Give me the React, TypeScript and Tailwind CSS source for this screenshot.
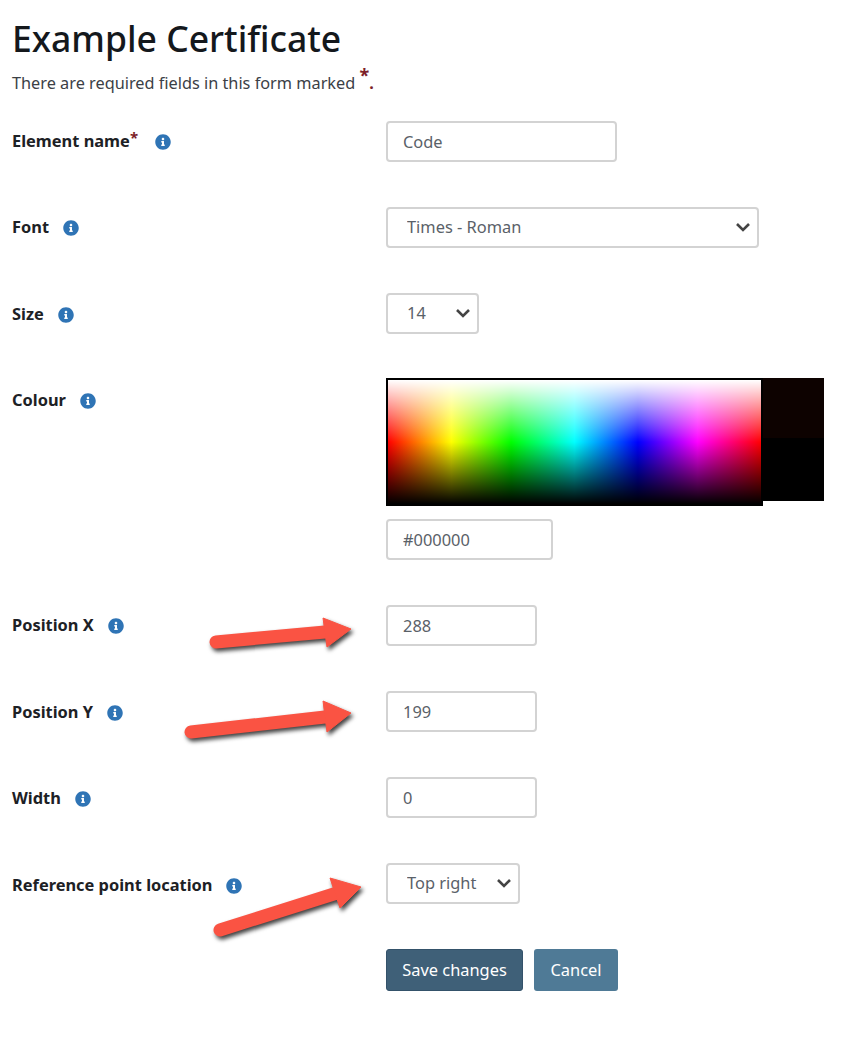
import { ReactNode } from "react";
import { FaInfoCircle } from "react-icons/fa";

function Label({ text, required, top = "pt-[9px]" }: { text: string; required?: boolean; top?: string }) {
  return (
    <div className={`${top} w-[386px] shrink-0 pl-3 flex items-start`}>
      <span className="text-[16.4px] leading-[22px] font-bold text-[#1d2125]">{text}</span>
      {required && <span className="text-[#7d1f2a] text-[15px] leading-[14px] font-bold">*</span>}
      <FaInfoCircle className={`${required ? "ml-[17px]" : "ml-[14px]"} mt-[4px] text-[#2f74b5] shrink-0`} size={16} />
    </div>
  );
}

function Row({ children, label, required, top }: { children: ReactNode; label: string; required?: boolean; top?: string }) {
  return (
    <div className="flex h-[86px]">
      <Label text={label} required={required} top={top} />
      <div>{children}</div>
    </div>
  );
}

function TextBox({ value, width }: { value: string; width: string }) {
  return (
    <input
      readOnly
      value={value}
      className={`${width} h-[41px] block rounded border-2 border-[#d3d3d3] bg-white pl-[15px] text-[16.4px] text-[#5a6168] outline-none`}
    />
  );
}

function Select({ value, width }: { value: string; width: string }) {
  return (
    <div className={`${width} relative h-[41px]`}>
      <select
        defaultValue={value}
        className="pl-[19px] w-full h-full appearance-none rounded border-2 border-[#d3d3d3] bg-white text-[16.4px] text-[#5a6168] outline-none"
      >
        <option>{value}</option>
      </select>
      <svg className="absolute right-[8px] top-[15px]" width="16" height="10" viewBox="0 0 16 10" fill="none">
        <path d="M2 2l6 6 6-6" stroke="#444" strokeWidth="2.6" />
      </svg>
    </div>
  );
}

function ColourPicker() {
  return (
    <div className="flex items-start h-[141px] -mt-px">
      <div className="w-[377px] h-[128px] border-2 border-black bg-[linear-gradient(to_right,#f00,#ff0_17%,#0f0_33%,#0ff_50%,#00f_67%,#f0f_83%,#f00)]">
        <div className="w-full h-full bg-[linear-gradient(to_bottom,#fff,rgba(255,255,255,0)_50%,rgba(0,0,0,0)_50%,#000)]" />
      </div>
      <div className="w-[61px] h-[123px] flex flex-col">
        <div className="h-[60px] bg-[#0d0200]" />
        <div className="flex-1 bg-black" />
      </div>
    </div>
  );
}

function Arrows() {
  const heads = [
    { tail: "216,642 325,632", head: "323,618 351,629 327,647" },
    { tail: "191,732 325,717", head: "323,701 351,713 327,732" },
    { tail: "220,930 337,893", head: "330,878 361,887 340,908" },
  ];
  return (
    <svg
      className="absolute left-0 top-0 pointer-events-none drop-shadow-[2px_3px_2px_rgba(0,0,0,0.75)]"
      width="854"
      height="1062"
    >
      {heads.map((a) => (
        <g key={a.head}>
          <polyline points={a.tail} stroke="#fa5343" strokeWidth="13" strokeLinecap="round" fill="none" />
          <polygon points={a.head} fill="#fa5343" stroke="#fa5343" strokeWidth="1" strokeLinejoin="round" />
        </g>
      ))}
    </svg>
  );
}

export default function App() {
  return (
    <div className="relative w-[854px] h-[1062px] bg-white overflow-hidden font-['Noto_Sans',sans-serif]">
      <h1 className="pl-3 pt-[14px] text-[35.5px] leading-[48px] font-medium text-[#14181c]">Example Certificate</h1>
      <p className="pl-3 mt-[8px] h-[51px] text-[16.3px] leading-[24px] text-[#3b4046]">
        There are required fields in this form marked{" "}
        <span className="text-[#7d1f2a] font-bold text-[18px] relative -top-[7px]">*</span>
        <span className="text-[#7d1f2a] font-bold">.</span>
      </p>
      <Row label="Element name" required>
        <TextBox value="Code" width="w-[231px]" />
      </Row>
      <Row label="Font">
        <Select value="Times - Roman" width="w-[373px]" />
      </Row>
      <Row label="Size" top="pt-[10px]">
        <Select value="14" width="w-[93px]" />
      </Row>
      <div className="flex h-[226px]">
        <Label text="Colour" top="pt-[10px]" />
        <div>
          <ColourPicker />
          <TextBox value="#000000" width="w-[167px]" />
        </div>
      </div>
      <Row label="Position X">
        <TextBox value="288" width="w-[151px]" />
      </Row>
      <Row label="Position Y" top="pt-[10px]">
        <TextBox value="199" width="w-[151px]" />
      </Row>
      <Row label="Width" top="pt-[10px]">
        <TextBox value="0" width="w-[151px]" />
      </Row>
      <Row label="Reference point location" top="pt-[11px]">
        <Select value="Top right" width="w-[134px]" />
      </Row>
      <div className="flex gap-[11px] pl-[386px]">
        <button className="h-[42px] w-[137px] rounded-[3px] border border-[#34526a] bg-[#3f6078] text-[16.4px] text-white">
          Save changes
        </button>
        <button className="h-[42px] w-[84px] rounded-[3px] bg-[#4f7a96] text-[16.4px] text-white">Cancel</button>
      </div>
      <Arrows />
    </div>
  );
}
